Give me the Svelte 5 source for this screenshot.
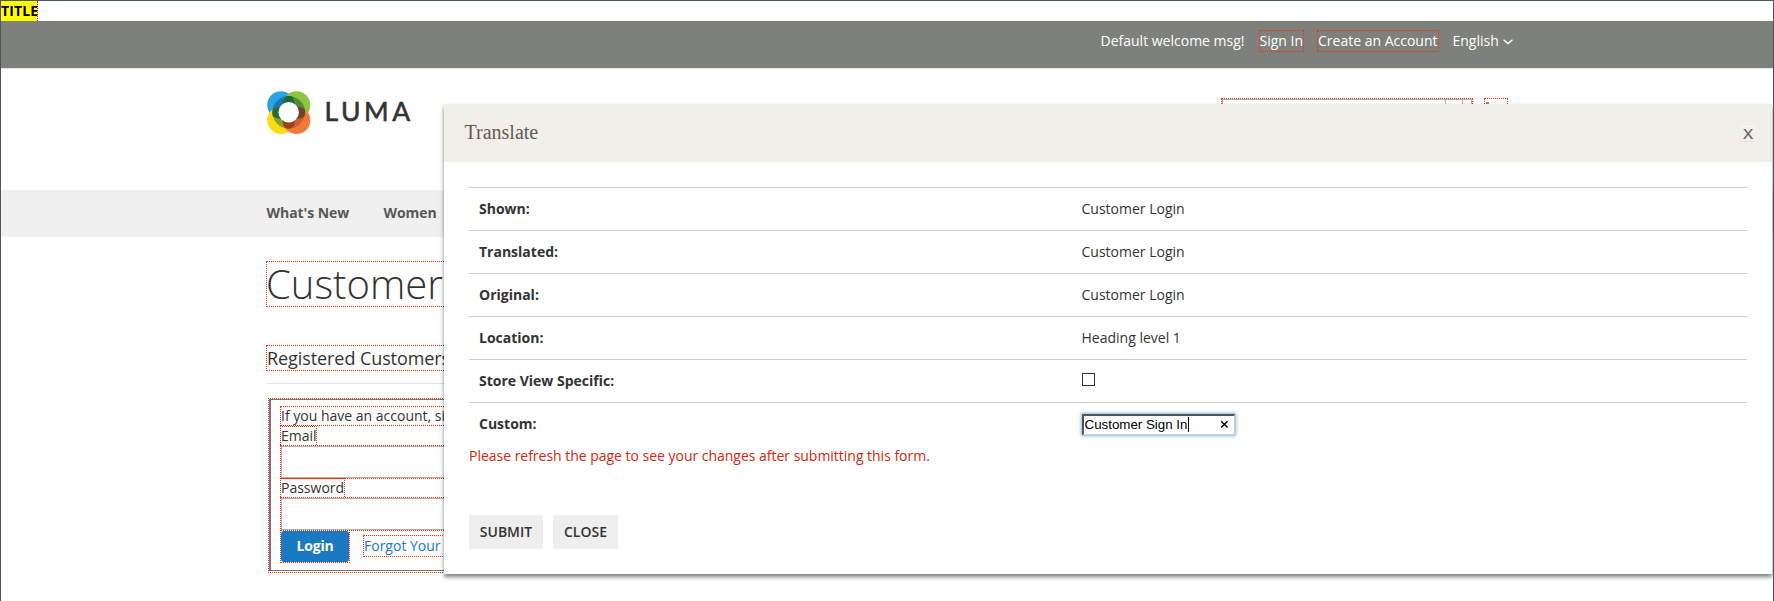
<script>
  const rows = [
    ['Shown:', 'Customer Login'],
    ['Translated:', 'Customer Login'],
    ['Original:', 'Customer Login'],
    ['Location:', 'Heading level 1'],
  ];
</script>

<div class="page">
  <div class="titlebar"><b class="title">TITLE</b></div>
  <header class="panel">
    <span class="welcome">Default welcome msg!</span>
    <a class="tr signin" href="#top">Sign In</a>
    <a class="tr create" href="#top">Create an Account</a>
    <span class="lang">English</span>
    <svg class="chev" width="12" height="8" viewBox="0 0 12 8"><path d="M1.5 1.8 L6 5.6 L10.5 1.8" fill="none" stroke="#fff" stroke-width="1.4" /></svg>
  </header>

  <div class="brand">
    <svg class="logo" width="44" height="44" viewBox="0 0 44 44">
      <defs>
        <clipPath id="tl"><circle cx="14" cy="14" r="13.8" /></clipPath>
        <clipPath id="tr"><circle cx="29.5" cy="14" r="13.8" /></clipPath>
        <clipPath id="bl"><circle cx="14" cy="29.2" r="13.8" /></clipPath>
        <clipPath id="ring"><circle cx="21.7" cy="21.3" r="16.3" /></clipPath>
      </defs>
      <circle cx="14" cy="14" r="13.8" fill="#26a4e3" />
      <circle cx="29.5" cy="14" r="13.8" fill="#8cc63e" />
      <circle cx="14" cy="29.2" r="13.8" fill="#ffdb16" />
      <circle cx="29.5" cy="29.2" r="13.8" fill="#f4783c" />
      <g clip-path="url(#ring)">
        <g clip-path="url(#tl)"><rect width="44" height="44" fill="#1c78b8" /></g>
        <g clip-path="url(#tr)"><rect width="44" height="44" fill="#56883c" /></g>
        <g clip-path="url(#bl)"><rect width="44" height="44" fill="#83a22e" /></g>
        <circle cx="29.5" cy="29.2" r="13.8" fill="#c95f2e" />
        <g clip-path="url(#tl)">
          <circle cx="29.5" cy="14" r="13.8" fill="#176b38" />
          <circle cx="14" cy="29.2" r="13.8" fill="#286c35" />
        </g>
        <g clip-path="url(#tr)"><circle cx="29.5" cy="29.2" r="13.8" fill="#6a452c" /></g>
        <g clip-path="url(#bl)"><circle cx="29.5" cy="29.2" r="13.8" fill="#9b431b" /></g>
      </g>
      <circle cx="21.7" cy="21.3" r="10.2" fill="#fff" />
    </svg>
    <span class="luma">LUMA</span>
    <div class="search"><i></i></div>
    <div class="cart"><i></i></div>
  </div>

  <nav><span class="n1">What's New</span><span class="n2">Women</span></nav>

  <main>
    <h1 class="tr">Customer</h1>
    <h2 class="tr">Registered Customers</h2>
    <div class="login">
      <div class="fs">
        <div class="tr note">If you have an account, si</div>
        <div class="tr lab email">Email</div>
        <div class="inp"><i></i></div>
        <div class="tr lab pw">Password</div>
        <div class="inp"><i></i></div>
        <div class="actions">
          <div class="tr btnbox"><button class="primary">Login</button></div>
          <a class="tr forgot" href="#top">Forgot Your</a>
        </div>
      </div>
    </div>
  </main>

  <section class="modal">
    <div class="mhead"><span class="mt">Translate</span><button class="x"><span>X</span></button></div>
    <div class="mbody">
      {#each rows as [k, v]}
        <div class="row"><b>{k}</b><span>{v}</span></div>
      {/each}
      <div class="row"><b>Store View Specific:</b><span class="check"></span></div>
      <div class="row">
        <b>Custom:</b>
        <div class="field">
          <span class="val">Customer Sign In</span><i class="caret"></i>
          <svg width="9" height="9" viewBox="0 0 9 9"><path d="M1.2 1.2 L7.6 7.6 M7.6 1.2 L1.2 7.6" stroke="#000" stroke-width="1.4" /></svg>
        </div>
      </div>
      <p class="msg">Please refresh the page to see your changes after submitting this form.</p>
      <div class="btns"><button class="b1">SUBMIT</button><button class="b2">CLOSE</button></div>
    </div>
  </section>
</div>

<style>
  :global(body) { margin: 0; background: #fff; }
  * { box-sizing: border-box; }
  .page {
    position: relative; width: 1774px; height: 601px; overflow: hidden;
    border: 1px solid #48565f; border-bottom: 0; background: #fff; color: #333;
    font: 14px/20px "Open Sans", sans-serif; white-space: nowrap;
  }
  .tr { border: 1px dotted #ff2a00; }
  a { text-decoration: none; color: inherit; }
  button { border: 0; margin: 0; padding: 0; font: inherit; color: inherit; }
  .titlebar { height: 20px; display: flex; }
  .title { width: 37px; height: 20px; background: #ff0; background-clip: padding-box; color: #000; border-right: 1px dotted #f00; line-height: 20px; font-size: 14px; letter-spacing: 0.1px; }
  .panel { height: 48px; background: #7e807c; border-bottom: 1px solid #e6e6e6; color: #fff; display: flex; align-items: flex-start; padding: 9px 0 0 1099.5px; }
  .welcome { width: 158.5px; line-height: 22px; }
  .signin { width: 45px; height: 22px; margin-right: 13px; text-indent: -0.5px; }
  .create { width: 122px; height: 22px; margin-right: 13px; }
  .lang { width: 50px; line-height: 22px; padding-left: 0.5px; }
  .chev { margin-top: 8px; }
  .brand { height: 121px; display: flex; align-items: flex-start; padding-left: 266px; }
  .logo { margin-top: 22px; flex: none; }
  .luma { font: 26.5px/32px Lato, sans-serif; margin: 26px 0 0 13.5px; width: 896.5px; letter-spacing: 3.6px; -webkit-text-stroke: 0.6px #333; }
  .search { width: 252px; height: 30px; margin-top: 29px; border: 1px dotted #ff2a00; flex: none; }
  .search i { display: block; height: 28px; border: 1px solid #aaa; background: linear-gradient(#f98, #f98) 222px 0 / 1px 28px no-repeat, linear-gradient(#f98, #f98) 239px 0 / 1px 28px no-repeat; }
  .cart { width: 24px; height: 30px; margin: 29px 0 0 11px; border: 1px dotted #ff2a00; flex: none; }
  .cart i { display: block; width: 3px; height: 2px; margin: 3px 0 0 1px; background: #8a8a8a; }
  nav { height: 47px; background: #f0f0f0; display: flex; padding-left: 265.5px; line-height: 46px; font-weight: 700; color: #575757; letter-spacing: -0.05px; }
  .n1 { width: 117px; }
  main { padding: 24px 0 0 265px; width: 443px; overflow: hidden; }
  h1 { margin: 0; height: 46px; width: 400px; font-size: 40px; line-height: 44px; font-weight: 300; text-indent: -1px; }
  h2 { margin: 38px 0 0; height: 26px; width: 400px; font-size: 18px; line-height: 24px; font-weight: 400; letter-spacing: -0.08px; }
  .login { margin: 12px 0 0 1px; width: 600px; border-top: 1px solid #e5e5e5; padding: 14px 0 0 1px; }
  .fs { height: 175px; border: 1px dotted #ff2a00; padding: 7px 0 0 11px; background: linear-gradient(#fff, #fff) 2px 1px / 100% 170px no-repeat padding-box, linear-gradient(#777, #777) 0 0 / 100% 172px no-repeat padding-box; }
  .note { height: 20px; line-height: 17px; }
  .lab { height: 19px; line-height: 18px; border-bottom: 0; }
  .email { width: 37px; }
  .pw { width: 65px; margin-top: -1px; line-height: 17px; }
  .inp { height: 34px; border: 1px dotted #ff2a00; border-right: 0; }
  .inp i { display: block; height: 32px; border: 1px solid #b4b4b4; }
  .inp + .lab { position: relative; }
  .actions { display: flex; }
  .btnbox { width: 70px; height: 33px; margin-top: -1px; }
  .primary { display: block; width: 68px; height: 31px; background: #1979c3; color: #fff; font-weight: 700; letter-spacing: -0.2px; border-radius: 3px; padding-bottom: 2px; }
  .forgot { margin: 4px 0 0 13px; height: 22px; color: #1979c3; width: 180px; }
  .modal { position: absolute; left: 443px; top: 103px; width: 1328px; height: 470px; background: #fff; box-shadow: 0 3px 4px rgba(0, 0, 0, 0.5); }
  .mhead { height: 58px; background: #f2efea; display: flex; justify-content: space-between; padding: 0 16px 0 20.5px; align-items: flex-start; color: #645c50; }
  .mt { font: 20px/24px "Liberation Serif", serif; margin-top: 16px; }
  .x { width: 16px; height: 16px; margin-top: 22px; border-radius: 3px; background: #f2f0ed; border-top: 1px solid #fcfbfa; border-bottom: 1px solid #e5e2dd; font-size: 14px; line-height: 14px; color: #555; }
  .x span { display: inline-block; transform: scaleX(1.2); -webkit-text-stroke: 0.2px #555; }
  .mbody { padding: 25px 25px 0; }
  .row { height: 43px; border-top: 1px solid #ccc; display: grid; grid-template-columns: 603px 1fr; align-items: center; padding: 0 0 0 10px; }
  .row b { font-weight: 700; }
  .row > span:not(.check) { margin-left: -0.5px; }
  .check { width: 13px; height: 13px; border: 1px solid #333; margin-top: -4px; }
  .field { width: 153px; height: 21px; border: 1px solid #ccc; border-top: 2px solid #555; border-left: 2px solid #555; box-shadow: 0 0 3px 1px #7db7ee; display: flex; align-items: center; font: 13.33px/17px "Liberation Sans", Arial, sans-serif; color: #000; background: #fff; }
  .val { margin-left: 0.5px; }
  .caret { width: 1px; height: 15px; margin-left: 0.5px; background: #000; }
  .field svg { margin-left: auto; margin-right: 5px; }
  .msg { margin: 0; height: 70px; line-height: 22px; color: #d1280f; letter-spacing: -0.02px; }
  .btns { display: flex; gap: 10px; }
  .btns button { height: 34px; background: #eee; font-weight: 600; width: 74px; }
  .btns .b2 { width: 65px; }
</style>
